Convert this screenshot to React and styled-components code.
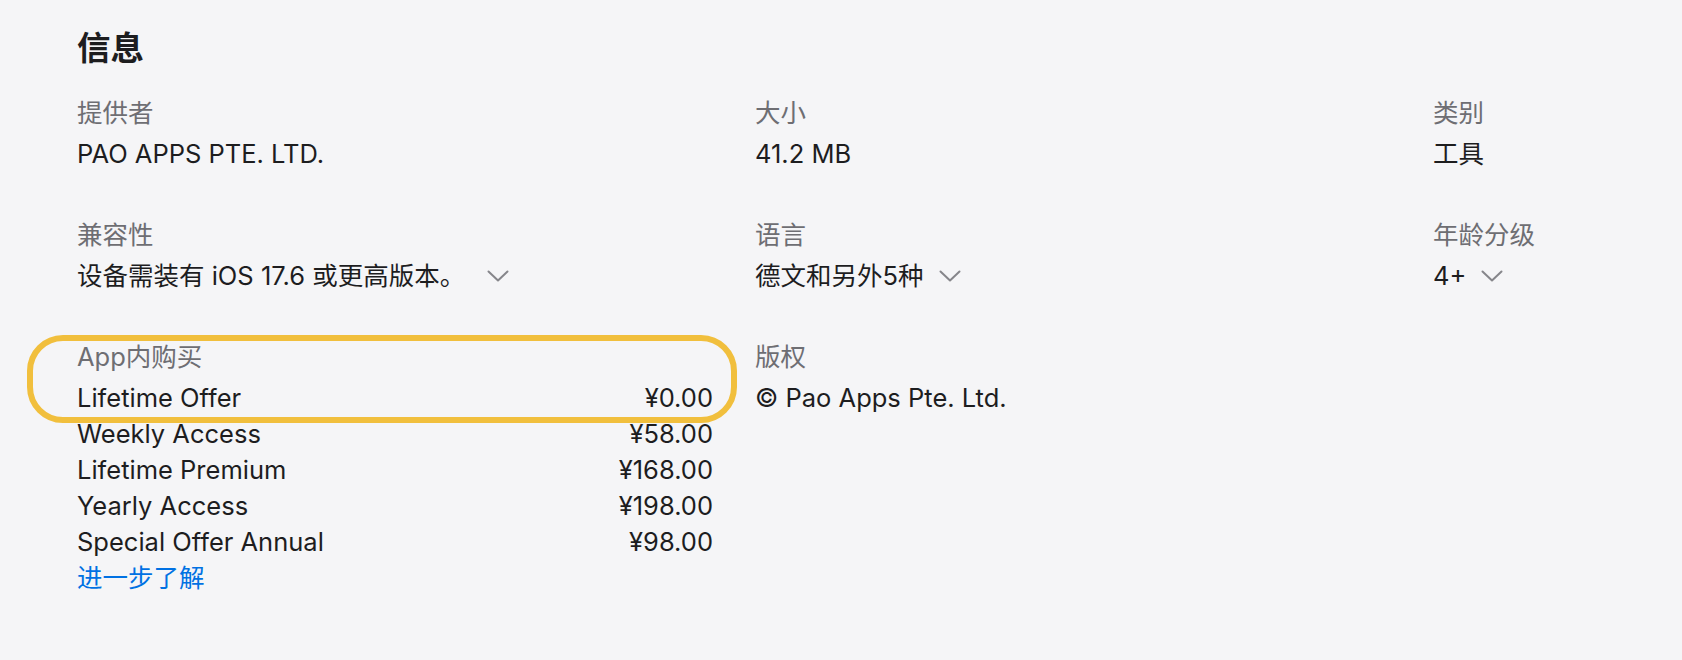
import React from 'react';
import styled, { createGlobalStyle } from 'styled-components';

const Global = createGlobalStyle`
  html, body {
    margin: 0;
    padding: 0;
    background: #f5f5f7;
  }
  body {
    font-family: Inter, "Noto Sans CJK SC", sans-serif;
    -webkit-font-smoothing: antialiased;
  }
`;

const Page = styled.section`
  min-height: 660px;
  box-sizing: border-box;
  padding: 28px 0 0 77px;
  background: #f5f5f7;
`;

const Title = styled.h2`
  margin: 0;
  font-size: 33.5px;
  line-height: 40px;
  font-weight: 700;
  color: #1d1d1f;
`;

const Grid = styled.dl`
  margin: 27px 0 0;
  display: grid;
  grid-template-columns: 636px 636px 1fr;
  column-gap: 42px;
  row-gap: 45px;
`;

const Item = styled.div`
  position: relative;
`;

const Label = styled.dt`
  margin: 0 0 5px;
  font-size: 25.5px;
  line-height: 36px;
  color: #6e6e73;
`;

const Value = styled.dd`
  margin: 0;
  font-size: 25.5px;
  line-height: 36px;
  color: #1d1d1f;
  display: flex;
  align-items: center;
`;

const Chevron = styled.svg`
  width: 22px;
  height: 12px;
  margin-left: ${(p) => (p.$wide ? '22px' : '15px')};
  flex: none;
`;

const PurchaseList = styled.dd`
  margin: 0;
  display: flex;
  flex-direction: column;
`;

const PurchaseRow = styled.div`
  display: flex;
  justify-content: space-between;
  font-size: 25.5px;
  line-height: 36px;
  color: #1d1d1f;
`;

const MoreLink = styled.a`
  font-size: 25.5px;
  line-height: 36px;
  color: #0071e3;
  text-decoration: none;
`;

const Highlight = styled.span`
  position: absolute;
  top: -4px;
  left: -50px;
  width: 710px;
  height: 88px;
  box-sizing: border-box;
  border: 6px solid #f1bf3d;
  border-radius: 36px;
  pointer-events: none;
`;

const Expand = ({ wide }) => (
  <Chevron $wide={wide} viewBox="0 0 22 12" aria-hidden="true">
    <polyline points="1.5,1.5 11,10.5 20.5,1.5" fill="none" stroke="#86868b" strokeWidth="2" strokeLinecap="round" strokeLinejoin="round" />
  </Chevron>
);

const purchases = [
  ['Lifetime Offer', '¥0.00'],
  ['Weekly Access', '¥58.00'],
  ['Lifetime Premium', '¥168.00'],
  ['Yearly Access', '¥198.00'],
  ['Special Offer Annual', '¥98.00'],
];

export default function App() {
  return (
    <>
      <Global />
      <Page>
        <Title>信息</Title>
        <Grid>
          <Item>
            <Label>提供者</Label>
            <Value>PAO APPS PTE. LTD.</Value>
          </Item>
          <Item>
            <Label>大小</Label>
            <Value>41.2 MB</Value>
          </Item>
          <Item>
            <Label>类别</Label>
            <Value>工具</Value>
          </Item>
          <Item>
            <Label>兼容性</Label>
            <Value>设备需装有 iOS 17.6 或更高版本。<Expand wide /></Value>
          </Item>
          <Item>
            <Label>语言</Label>
            <Value>德文和另外5种<Expand /></Value>
          </Item>
          <Item>
            <Label>年龄分级</Label>
            <Value>4+<Expand /></Value>
          </Item>
          <Item>
            <Label>App内购买</Label>
            <PurchaseList>
              {purchases.map(([name, price]) => (
                <PurchaseRow key={name}>
                  <span>{name}</span>
                  <span>{price}</span>
                </PurchaseRow>
              ))}
              <div>
                <MoreLink href="#">进一步了解</MoreLink>
              </div>
            </PurchaseList>
            <Highlight />
          </Item>
          <Item>
            <Label>版权</Label>
            <Value>© Pao Apps Pte. Ltd.</Value>
          </Item>
        </Grid>
      </Page>
    </>
  );
}
